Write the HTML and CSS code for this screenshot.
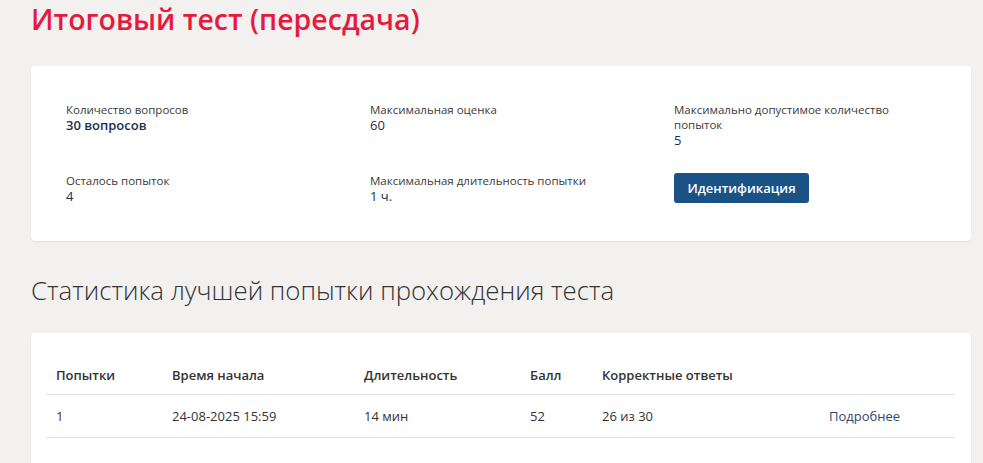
FILE: index.html
```html
<!DOCTYPE html>
<html lang="ru">

<head>
    <meta charset="UTF-8">
    <meta name="viewport" content="width=device-width, initial-scale=1.0">
    <title>Итоговый тест (пересдача)</title>
    <link rel="stylesheet" href="styles.css">
</head>

<body>
    <div class="page">
        <h1 class="page-title">Итоговый тест (пересдача)</h1>

        <div class="card info-card">
            <div class="info-grid">
                <div class="info-item">
                    <div class="info-label">Количество вопросов</div>
                    <div class="info-value strong">30 вопросов</div>
                </div>
                <div class="info-item">
                    <div class="info-label">Максимальная оценка</div>
                    <div class="info-value">60</div>
                </div>
                <div class="info-item">
                    <div class="info-label">Максимально допустимое количество попыток</div>
                    <div class="info-value">5</div>
                </div>
                <div class="info-item">
                    <div class="info-label">Осталось попыток</div>
                    <div class="info-value">4</div>
                </div>
                <div class="info-item">
                    <div class="info-label">Максимальная длительность попытки</div>
                    <div class="info-value">1 ч.</div>
                </div>
                <div class="info-item">
                    <button type="button" class="btn-primary">Идентификация</button>
                </div>
            </div>
        </div>

        <h2 class="section-title">Статистика лучшей попытки прохождения теста</h2>

        <div class="card table-card">
            <table class="stats-table">
                <thead>
                    <tr>
                        <th class="col-try">Попытки</th>
                        <th class="col-start">Время начала</th>
                        <th class="col-dur">Длительность</th>
                        <th class="col-score">Балл</th>
                        <th class="col-correct">Корректные ответы</th>
                        <th class="col-link"></th>
                    </tr>
                </thead>
                <tbody>
                    <tr>
                        <td>1</td>
                        <td>24-08-2025 15:59</td>
                        <td>14 мин</td>
                        <td>52</td>
                        <td>26 из 30</td>
                        <td><a href="#" class="more-link">Подробнее</a></td>
                    </tr>
                </tbody>
            </table>
        </div>
    </div>
</body>

</html>
```

FILE: styles.css
```css
body {
    font-family: 'Open Sans', 'Noto Sans', sans-serif;
    margin: 0;
    padding: 0;
    background-color: #f2f1ef;
    color: #333;
}

.page {
    width: 940px;
    padding-left: 31px;
}

.page-title {
    margin: 0 0 28px;
    font-size: 28.5px;
    line-height: 38px;
    font-weight: 600;
    color: #e41b3f;
}

.card {
    background-color: #fff;
    border-radius: 4px;
    box-shadow: 0 1px 2px rgba(0, 0, 0, 0.07);
}

/* Test info */
.info-card {
    padding: 36px 35px 37px;
}

.info-grid {
    display: grid;
    grid-template-columns: 304px 304px 236px;
    row-gap: 25px;
}

.info-label {
    font-size: 11.5px;
    line-height: 15px;
    color: #3a3a3a;
}

.info-value {
    font-size: 13px;
    line-height: 16px;
    color: #1c2f52;
}

.info-value.strong {
    font-weight: 600;
}

.btn-primary {
    background-color: #1b5286;
    color: #fff;
    border: none;
    border-radius: 3px;
    width: 135px;
    height: 30px;
    padding: 0;
    font-family: inherit;
    font-size: 13px;
    font-weight: 600;
    cursor: pointer;
}

/* Best attempt */
.section-title {
    margin: 33px 0 27px;
    font-size: 25.8px;
    line-height: 32px;
    font-weight: 300;
    color: #333;
}

.table-card {
    padding: 14px 16px 30px 15px;
}

.stats-table {
    width: 100%;
    border-collapse: collapse;
    font-size: 13px;
}

.stats-table th {
    text-align: left;
    font-weight: 600;
    line-height: 19px;
    padding: 19px 10px 9px;
    border-bottom: 1px solid #e2e2e2;
}

.stats-table td {
    line-height: 19px;
    padding: 12px 10px 11px;
    border-bottom: 1px solid #e2e2e2;
}

.col-try { width: 96px; }
.col-start { width: 172px; }
.col-dur { width: 146px; }
.col-score { width: 52px; }
.col-correct { width: 207px; }

.more-link {
    color: #2b4a74;
    text-decoration: none;
}
```
